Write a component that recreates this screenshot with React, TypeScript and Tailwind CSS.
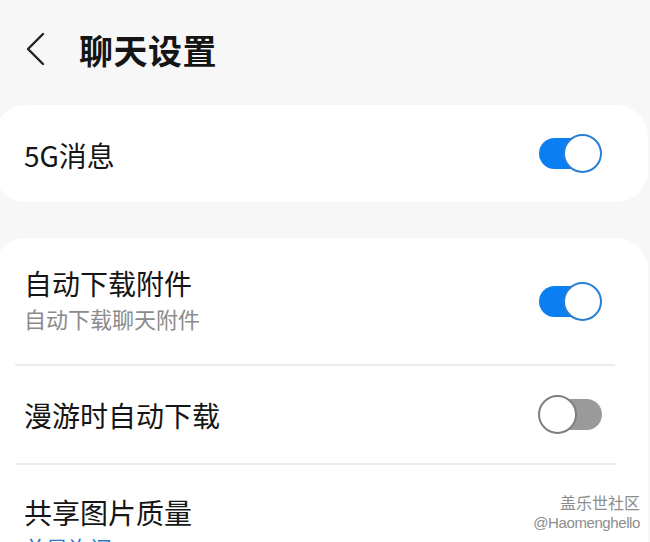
const FONT = { fontFamily: '"Noto Sans CJK SC", "Noto Sans", sans-serif' };

function Toggle({ on }: { on: boolean }) {
  if (on) {
    return (
      <div className="relative h-[39px] w-[63px] shrink-0">
        <div className="absolute left-0 top-[4px] h-[31px] w-[56px] rounded-full bg-[#0b7ff2]" />
        <div className="absolute right-0 top-0 h-[39px] w-[39px] rounded-full border-2 border-[#2a7fd4] bg-white" />
      </div>
    );
  }
  return (
    <div className="relative h-[39px] w-[64px] shrink-0">
      <div className="absolute right-0 top-[4px] h-[31px] w-[56px] rounded-full bg-[#9a9a9a]" />
      <div className="absolute left-0 top-0 h-[39px] w-[39px] rounded-full border-2 border-[#7f7f7f] bg-white" />
    </div>
  );
}

function Divider() {
  return <div className="ml-[21px] mr-[33px] h-[2px] bg-[#ececec]" />;
}

export default function App() {
  return (
    <div className="relative h-[542px] w-[650px] overflow-hidden bg-[#f7f7f7] text-[#151515]" style={FONT}>
      <header className="flex h-[105px] items-start">
        <svg className="ml-[25px] mt-[32px]" width="22" height="34" viewBox="0 0 22 34" fill="none">
          <polyline points="18,2 3,17 18,32" stroke="#222" strokeWidth="2.4" strokeLinecap="round" strokeLinejoin="round" />
        </svg>
        <h1 className="ml-[32px] mt-[28px] text-[34px] font-bold leading-[44px] tracking-[0.5px]">聊天设置</h1>
      </header>

      <section className="ml-[-6px] mr-[2px] flex h-[97px] items-center justify-between rounded-[32px] bg-white pl-[30px] pr-[46px]">
        <span className="mt-[3px] text-[28px] leading-[36px]">5G消息</span>
        <Toggle on />
      </section>

      <section className="ml-[-6px] mr-[2px] mt-[36px] rounded-[32px] bg-white">
        <div className="flex h-[126px] items-center justify-between pl-[30px] pr-[46px]">
          <div className="flex flex-col gap-[3px] pb-[4px]">
            <span className="text-[28px] leading-[36px]">自动下载附件</span>
            <span className="text-[22px] leading-[29px] text-[#8b8b8b]">自动下载聊天附件</span>
          </div>
          <Toggle on />
        </div>
        <Divider />
        <div className="flex h-[97px] items-center justify-between pl-[30px] pr-[46px]">
          <span className="text-[28px] leading-[36px]">漫游时自动下载</span>
          <Toggle on={false} />
        </div>
        <Divider />
        <div className="flex flex-col gap-[3px] pl-[30px] pt-[29px] pb-[30px]">
          <span className="text-[28px] leading-[36px]">共享图片质量</span>
          <span className="text-[22px] leading-[29px] text-[#2a78c8]">总是询问</span>
        </div>
      </section>

      <div className="absolute right-[10px] top-[491px] flex flex-col items-end text-[#8d8d8d] [text-shadow:0_0_2px_#fff]">
        <span className="text-[16px] leading-[22px]">盖乐世社区</span>
        <span className="text-[15px] leading-[20px] tracking-[-0.4px]" style={{ fontFamily: '"Liberation Sans", sans-serif' }}>@Haomenghello</span>
      </div>
    </div>
  );
}
